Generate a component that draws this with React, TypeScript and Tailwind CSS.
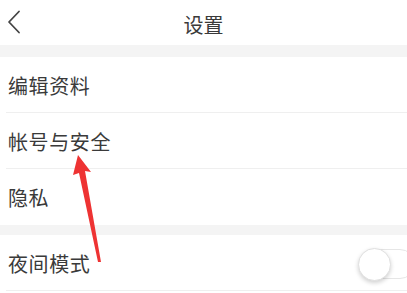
const font = { fontFamily: '"Noto Sans CJK SC", "Noto Sans", sans-serif' };

function Row({ label, last, children }: { label: string; last?: boolean; children?: React.ReactNode }) {
  return (
    <div className="pl-[6px] bg-white">
      <div className={`h-[56px] flex items-center justify-between pl-[2px] ${last ? '' : 'border-b border-[#efefef]'}`}>
        <span className="text-[20px] text-[#3a3a3a] tracking-[0.6px] pt-[2px]">{label}</span>
        {children}
      </div>
    </div>
  );
}

export default function App() {
  return (
    <div className="relative w-[407px] h-[293px] overflow-hidden bg-white" style={font}>
      {/* Header */}
      <div className="h-[45px] flex items-center relative">
        <svg width="14" height="24" viewBox="0 0 14 24" className="ml-[7px] mt-[-2px]">
          <path d="M12 1.5 L2 12 L12 22.5" fill="none" stroke="#444" strokeWidth="1.8" strokeLinecap="round" strokeLinejoin="round" />
        </svg>
        <span className="absolute left-1/2 -translate-x-1/2 top-[10px] text-[20px] text-[#3a3a3a]">设置</span>
      </div>
      <div className="h-[12px] bg-[#f4f4f4]" />

      <Row label="编辑资料" />
      <Row label="帐号与安全" />
      <Row label="隐私" last />

      <div className="h-[10px] bg-[#f4f4f4]" />

      <Row label="夜间模式">
        <div className="relative w-[56px] h-[30px] mr-[-8px] mt-[3px] rounded-full border border-[#e6e6e6] bg-white">
          <div className="absolute left-[-2px] top-[-2px] w-[33px] h-[33px] rounded-full bg-white border border-[#e0e0e0] shadow-[0_2px_4px_rgba(0,0,0,0.18)]" />
        </div>
      </Row>

      {/* Red annotation arrow */}
      <svg className="absolute left-0 top-0 pointer-events-none" width="407" height="293">
        <polygon points="78,155 91,172 85,171 101,262 98,262 79,173 73,175" fill="#ee3333" />
      </svg>
    </div>
  );
}
